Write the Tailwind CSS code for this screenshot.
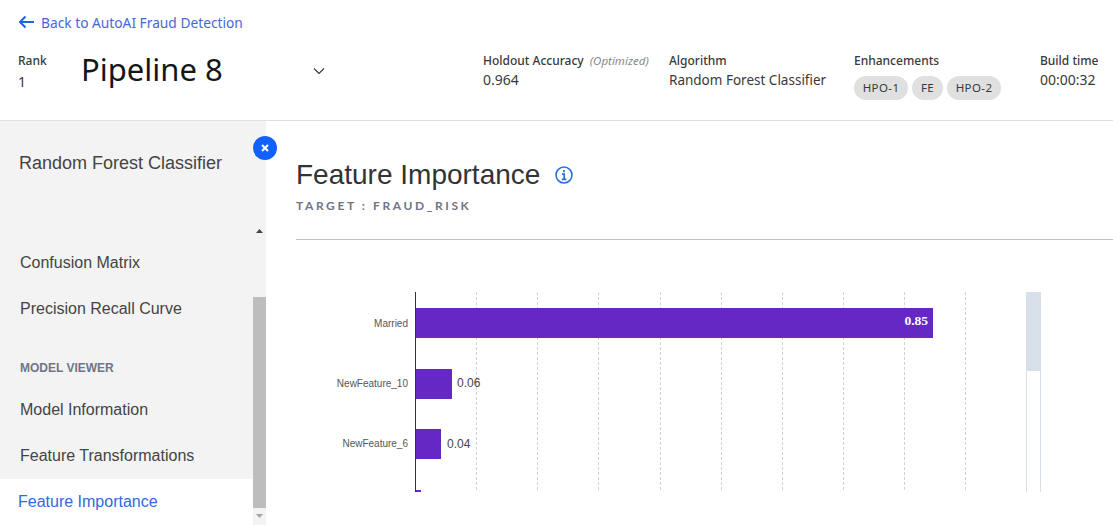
<!DOCTYPE html>
<html lang="en">
<head>
  <meta charset="UTF-8" />
  <title>Feature Importance</title>
  <script src="https://cdn.jsdelivr.net/npm/@tailwindcss/browser@4"></script>
</head>
<body class="bg-white h-[525px] w-[1113px] overflow-hidden font-['Liberation_Sans',sans-serif]">

  <!-- Header -->
  <header class="h-[121px] border-b border-[#e0e0e0] pl-[18px] font-['Noto_Sans',sans-serif] text-[#393939]">
    <a class="flex items-center h-[16px] pt-[15px] box-content text-[13.750px] text-[#4468d8]">
      <svg class="w-[17px] h-[14px] mr-[6px] -mt-[3px]" viewBox="0 0 17 14" fill="none" stroke="#1f62ee" stroke-width="2">
        <path d="M16 7H2M7.5 1.5L2 7l5.500 5.500" />
      </svg>
      Back to AutoAI Fraud Detection
    </a>
    <div class="flex mt-[20px]">
      <div class="w-[63px] pt-[2px]">
        <p class="text-[12px] leading-[16px] font-medium">Rank</p>
        <p class="text-[14px] leading-[26px]">1</p>
      </div>
      <div class="w-[402px] flex items-center h-[44px] -mt-[4px] text-[#161616]">
        <h1 class="w-[232px] text-[31px] leading-[40px]">Pipeline 8</h1>
        <svg class="w-[12px] h-[8px] mt-[3px]" viewBox="0 0 12 8" fill="none" stroke="#333" stroke-width="1.100">
          <path d="M1 1.500l5 5 5-5" />
        </svg>
      </div>
      <div class="w-[186px] pt-[2px]">
        <p class="text-[12px] leading-[16px] font-medium whitespace-nowrap">Holdout Accuracy <i class="ml-[3px] font-normal text-[11.500px] text-[#8a8a8a]">(Optimized)</i></p>
        <p class="text-[14px] leading-[22px]">0.964</p>
      </div>
      <div class="w-[185px] pt-[2px]">
        <p class="text-[12px] leading-[16px] font-medium">Algorithm</p>
        <p class="text-[13.500px] leading-[22px]">Random Forest Classifier</p>
      </div>
      <div class="w-[186px] pt-[2px]">
        <p class="text-[12px] leading-[16px] font-medium">Enhancements</p>
        <div class="flex gap-[4px] mt-[7px] text-[11.500px] tracking-[0.400px] leading-[24px]">
          <span class="bg-[#e0e0e0] rounded-full w-[54px] text-center">HPO-1</span>
          <span class="bg-[#e0e0e0] rounded-full w-[31px] text-center">FE</span>
          <span class="bg-[#e0e0e0] rounded-full w-[54px] text-center">HPO-2</span>
        </div>
      </div>
      <div class="pt-[2px]">
        <p class="text-[12px] leading-[16px] font-medium whitespace-nowrap">Build time</p>
        <p class="text-[14px] leading-[22px]">00:00:32</p>
      </div>
    </div>
  </header>

  <div class="relative flex h-[404px]">
    <!-- Sidebar -->
    <aside class="w-[266px] flex bg-[#f3f3f3] text-[#444]">
      <nav class="w-[253px] flex flex-col text-[16px]">
        <p class="pl-[19px] pt-[31px] h-[100px] text-[18px] leading-[22px]">Random Forest Classifier</p>
        <a class="pl-[20px] mt-[31px] h-[46px] leading-[22px]">Confusion Matrix</a>
        <a class="pl-[20px] h-[46px] leading-[22px]">Precision Recall Curve</a>
        <p class="pl-[20px] h-[55px] pt-[13px] text-[12px] leading-[22px] font-bold text-[#6f7587]">MODEL VIEWER</p>
        <a class="pl-[20px] h-[46px] leading-[22px]">Model Information</a>
        <a class="pl-[20px] h-[34px] leading-[22px]">Feature Transformations</a>
        <a class="pl-[18px] pt-[12px] h-[46px] leading-[22px] bg-white text-[#2f6ae0]">Feature Importance</a>
      </nav>
      <div class="w-[13px] flex flex-col items-center pt-[108px]">
        <svg class="w-[7px] h-[4px] shrink-0" viewBox="0 0 7 4"><path d="M0 4L3.500 0 7 4z" fill="#444" /></svg>
        <div class="w-[13px] h-[211px] mt-[64px] bg-[#bdbdbd]"></div>
        <svg class="w-[7px] h-[4px] mt-[6px] shrink-0" viewBox="0 0 7 4"><path d="M0 0L3.500 4 7 0z" fill="#a3a3a3" /></svg>
      </div>
    </aside>

    <!-- Collapse button -->
    <button class="absolute left-[253px] top-[15px] w-[24px] h-[24px] rounded-full bg-[#1261fe] flex items-center justify-center">
      <svg class="w-[8px] h-[8px]" viewBox="0 0 8 8" fill="none" stroke="#fff" stroke-width="2"><path d="M1 1l6 6M7 1L1 7" /></svg>
    </button>

    <!-- Main -->
    <main class="flex-1 pl-[30px]">
      <div class="flex items-center pt-[37px] h-[71px] box-border">
        <h2 class="text-[28px] leading-[34px] text-[#333]">Feature Importance</h2>
        <svg class="w-[18px] h-[18px] ml-[15px]" viewBox="0 0 18 18" fill="none">
          <circle cx="9" cy="9" r="8" stroke="#2a6fdb" stroke-width="1.600" />
          <path d="M9 4v2.200M7 8.200h2.200v5M6.800 13.300h4.600" stroke="#2a6fdb" stroke-width="1.700" />
        </svg>
      </div>
      <p class="mt-[6px] text-[12px] leading-[16px] font-['Lato',sans-serif] font-bold tracking-[2.600px] text-[#6f7587]">TARGET : FRAUD_RISK</p>
      <div class="mt-[25px] border-t border-[#c4c4c4]"></div>

      <!-- Chart, x/y origin at 296,240 of the page -->
      <svg class="block -ml-[296px]" width="1113" height="285" viewBox="0 240 1113 285">
        <g stroke="#cfd3d8" stroke-dasharray="3 2">
          <path d="M476.500 292V492M537.500 292V492M598.500 292V492M660.500 292V492M721.500 292V492M782.500 292V492M843.500 292V492M904.500 292V492M965.500 292V492" />
        </g>
        <rect x="415" y="308" width="518" height="30" fill="#6528c4" />
        <rect x="415" y="369" width="37" height="30" fill="#6528c4" />
        <rect x="415" y="429" width="26" height="30" fill="#6528c4" />
        <rect x="415" y="490" width="6" height="2" fill="#6528c4" />
        <path d="M415.500 292V492" stroke="#333" />

        <g class="text-[10px]" fill="#555" text-anchor="end">
          <text x="408" y="327">Married</text>
          <text x="408" y="387">NewFeature_10</text>
          <text x="408" y="447">NewFeature_6</text>
        </g>
        <g class="text-[12px]" fill="#444">
          <text x="457" y="387">0.06</text>
          <text x="447" y="448">0.04</text>
        </g>
        <text x="928" y="325" class="text-[13.500px] font-bold font-['Liberation_Serif',serif]" fill="#fff" text-anchor="end">0.85</text>

        <!-- range slider -->
        <rect x="1026" y="292" width="15" height="79" fill="#d7dfe8" />
        <path d="M1026.500 371V492M1040.500 371V492" stroke="#d7dfe8" />
      </svg>
    </main>
  </div>
</body>
</html>
